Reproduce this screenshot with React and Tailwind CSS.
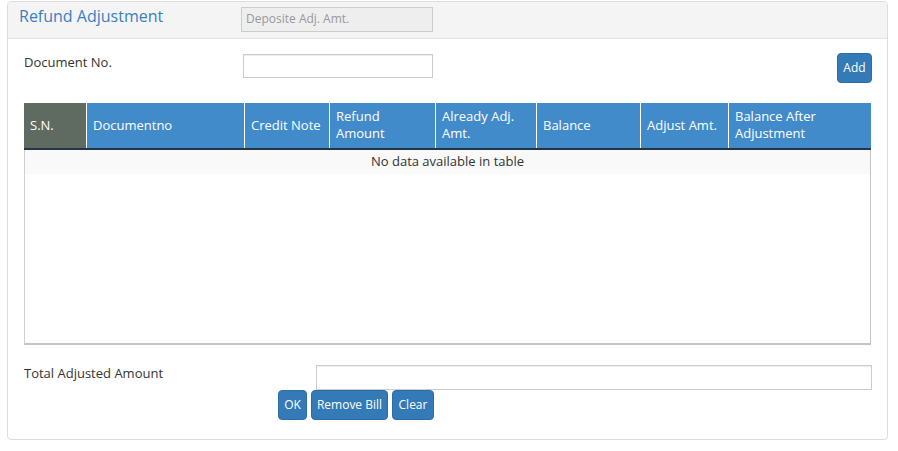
import React from "react";

const cols = [
  { label: "S.N.", w: "w-[62px]", bg: "bg-[#5f6b61]", first: true },
  { label: "Documentno", w: "w-[158px]" },
  { label: "Credit Note", w: "w-[85px]" },
  { label: ["Refund", "Amount"], w: "w-[106px]" },
  { label: ["Already Adj.", "Amt."], w: "w-[101px]" },
  { label: "Balance", w: "w-[104px]" },
  { label: "Adjust Amt.", w: "w-[88px]" },
  { label: ["Balance After", "Adjustment"], w: "w-[142px]" },
];

export default function App() {
  return (
    <div
      className="w-[898px] h-[451px] bg-white pl-[7px] pt-[1px] text-[#333]"
      style={{ fontFamily: '"Open Sans", "Noto Sans", sans-serif' }}
    >
      <div className="w-[881px] h-[439px] border border-[#dddddd] rounded-[4px] flex flex-col">
        {/* header */}
        <div className="h-[37px] bg-[#f4f4f4] border-b border-[#e3e3e3] rounded-t-[4px] flex items-center pl-[11px]">
          <div className="w-[222px] text-[16px] text-[#3a7fc4] leading-none -mt-[9px]">Refund Adjustment</div>
          <div className="w-[192px] h-[25px] -mt-[2px] border border-[#cccccc] bg-[#eeeeee] flex items-center pl-[4px] text-[12px] text-[#999]">
            Deposite Adj. Amt.
          </div>
        </div>

        {/* body */}
        <div className="flex flex-col pl-[16px] pr-[15px] pt-[14px]">
          <div className="flex items-start h-[30px]">
            <div className="w-[219px] text-[13px] leading-[18px]">Document No.</div>
            <div className="w-[190px] h-[24px] mt-[1px] border border-[#cccccc] bg-white shadow-[inset_0_1px_1px_rgba(0,0,0,0.075)]"></div>
            <div className="flex-1"></div>
            <button className="w-[35px] h-[30px] bg-[#337ab7] border border-[#2e6da4] rounded-[4px] text-white text-[12px] leading-none">
              Add
            </button>
          </div>

          {/* table */}
          <div className="mt-[20px] w-[847px]">
            <div className="flex h-[47px] border-b-2 border-[#243548] bg-[#428bca] text-white text-[13px]">
              {cols.map((c, i) => (
                <div
                  key={i}
                  className={`${c.w} ${c.bg || ""} ${c.first ? "" : "border-l border-white"} flex items-center pl-[6px] pb-[1px] leading-[17px]`}
                >
                  {Array.isArray(c.label) ? (
                    <div className="flex flex-col">
                      <span>{c.label[0]}</span>
                      <span>{c.label[1]}</span>
                    </div>
                  ) : (
                    <span>{c.label}</span>
                  )}
                </div>
              ))}
            </div>
            <div className="h-[195px] border-l border-r border-b-2 border-[#c4c4c4] border-l-[#cfcfcf]">
              <div className="h-[24px] bg-[#f9f9f9] flex items-center justify-center text-[13px] text-[#333]">
                No data available in table
              </div>
            </div>
          </div>

          {/* total */}
          <div className="mt-[20px] flex items-start">
            <div className="w-[292px] text-[13px] leading-[18px] -mt-[1px]">Total Adjusted Amount</div>
            <div className="w-[556px] h-[25px] border border-[#cccccc] bg-white shadow-[inset_0_1px_1px_rgba(0,0,0,0.075)]"></div>
          </div>
          <div className="flex pl-[254px] gap-[4px]">
            <button className="w-[29px] h-[30px] bg-[#337ab7] border border-[#2e6da4] rounded-[4px] text-white text-[12px] leading-none">
              OK
            </button>
            <button className="w-[77px] h-[30px] bg-[#337ab7] border border-[#2e6da4] rounded-[4px] text-white text-[12px] leading-none">
              Remove Bill
            </button>
            <button className="w-[42px] h-[30px] bg-[#337ab7] border border-[#2e6da4] rounded-[4px] text-white text-[12px] leading-none">
              Clear
            </button>
          </div>
        </div>
      </div>
    </div>
  );
}
